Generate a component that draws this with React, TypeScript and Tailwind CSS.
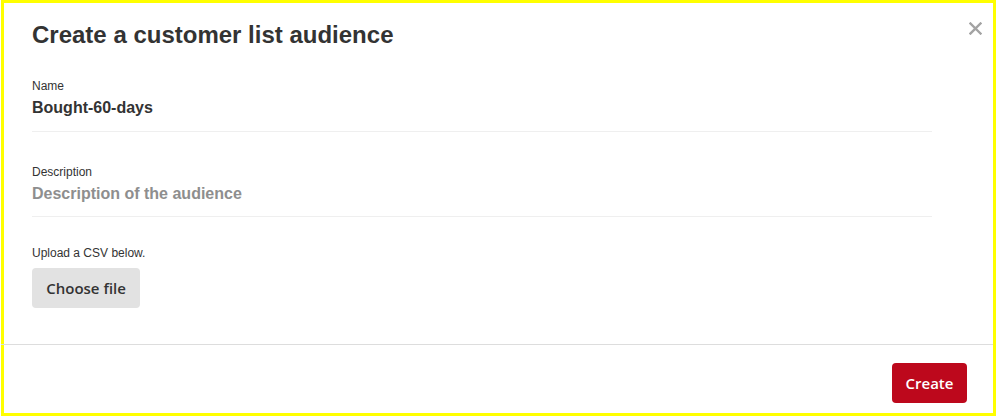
import React from "react";

export default function App() {
  return (
    <div className="w-[998px] h-[419px] bg-white" style={{ fontFamily: '"Liberation Sans", Arial, sans-serif' }}>
      <div className="ml-[1px] w-[995px] h-[416px] border-[3px] border-[#ffff00] flex flex-col relative bg-white">
        <button className="absolute right-[11px] top-[19px] w-[13px] h-[13px] flex items-center justify-center" aria-label="Close">
          <svg width="13" height="13" viewBox="0 0 13 13">
            <path d="M1.5 1.5 L11.5 11.5 M11.5 1.5 L1.5 11.5" stroke="#a3a3a3" strokeWidth="2.4" strokeLinecap="square" />
          </svg>
        </button>
        <div className="flex-1 pl-[28px] pt-[18px]">
          <h1 className="text-[24px] leading-[28px] font-bold text-[#333333]">Create a customer list audience</h1>
          <div className="w-[900px] mt-[29px]">
            <div className="text-[12px] leading-[16px] text-[#333333]">Name</div>
            <div className="mt-[2px] text-[16px] leading-[24px] font-bold text-[#333333]">Bought-60-days</div>
            <div className="mt-[11px] h-px bg-[#efefef]" />
            <div className="mt-[32px] text-[12px] leading-[16px] text-[#333333]">Description</div>
            <div className="mt-[2px] text-[16px] leading-[24px] font-bold text-[#8e8e8e]">Description of the audience</div>
            <div className="mt-[10px] h-px bg-[#efefef]" />
            <div className="mt-[28px] text-[12px] leading-[16px] text-[#333333]">Upload a CSV below.</div>
            <button
              className="mt-[7px] w-[108px] h-[40px] rounded-[4px] bg-[#e2e2e2] text-[15px] font-semibold text-[#333333] flex items-center justify-center"
              style={{ fontFamily: '"Open Sans", sans-serif' }}
            >
              Choose file
            </button>
          </div>
        </div>
        <div className="h-px bg-[#dddddd] -ml-[3px]" />
        <div className="h-[68px] flex justify-end items-start pt-[18px] pr-[26px]">
          <button
            className="w-[75px] h-[40px] rounded-[4px] bg-[#bd081c] text-white text-[15px] font-semibold flex items-center justify-center"
            style={{ fontFamily: '"Open Sans", sans-serif' }}
          >
            Create
          </button>
        </div>
      </div>
    </div>
  );
}
